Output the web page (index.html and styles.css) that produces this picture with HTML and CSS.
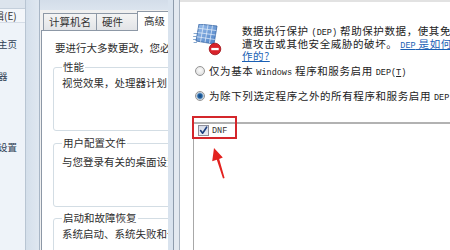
FILE: index.html
```html
<!DOCTYPE html>
<html lang="zh-CN">
<head>
<meta charset="utf-8">
<title>DEP</title>
<link rel="stylesheet" href="styles.css">
</head>
<body>
<div class="screen">
  <aside class="sidebar">
    <div class="menubar"></div>
    <div class="menurow"><span class="menu-text">编辑(E)</span></div>
    <ul class="links">
      <li class="home">控制面板主页</li>
      <li>设备管理器</li>
      <li>远程设置</li>
      <li>系统保护</li>
      <li>高级系统设置</li>
    </ul>
  </aside>
  <div class="frame-left"></div>
  <section class="dlg1">
    <div class="titlebar"></div>
    <div class="client">
      <div class="tabs">
        <span class="tab t-name">计算机名</span>
        <span class="tab t-hw">硬件</span>
        <span class="tab active">高级</span>
      </div>
      <div class="panel">
        <p class="intro">要进行大多数更改，您必须作为管理员登录。</p>
        <fieldset class="grp g1"><legend>性能</legend><p>视觉效果，处理器计划，内存使用，以及虚拟内存</p></fieldset>
        <fieldset class="grp g2"><legend>用户配置文件</legend><p>与您登录有关的桌面设置</p></fieldset>
        <fieldset class="grp g3"><legend>启动和故障恢复</legend><p>系统启动、系统失败和调试信息</p></fieldset>
      </div>
    </div>
  </section>
  <div class="frame-mid"></div>
  <section class="dlg2">
    <div class="head">
      <svg class="dep-icon" width="32" height="32" viewBox="0 0 32 32">
        <defs>
          <linearGradient id="pg" x1="0" y1="0" x2="1" y2="1">
            <stop offset="0" stop-color="#9cc0ec"/>
            <stop offset="1" stop-color="#4a7fc4"/>
          </linearGradient>
        </defs>
        <g stroke="#86a8cf" stroke-width="1" stroke-linecap="round">
          <line x1="1" y1="9.5" x2="5" y2="9.5"/>
          <line x1="0.5" y1="12.5" x2="4.5" y2="12.5"/>
          <line x1="0.5" y1="15.5" x2="4" y2="15.5"/>
          <line x1="1" y1="18.5" x2="3.5" y2="18.5"/>
        </g>
        <polygon points="6,0 24,2 21,20 3,17" fill="url(#pg)" stroke="#3a67a5" stroke-width="0.8"/>
        <g stroke="#e8f1fc" stroke-width="0.7">
          <line x1="10.5" y1="0.5" x2="7.5" y2="17.75"/>
          <line x1="15" y1="1" x2="12" y2="18.5"/>
          <line x1="19.5" y1="1.5" x2="16.5" y2="19.25"/>
          <line x1="5.25" y1="4.25" x2="23.25" y2="6.5"/>
          <line x1="4.5" y1="8.5" x2="22.5" y2="11"/>
          <line x1="3.75" y1="12.75" x2="21.75" y2="15.5"/>
        </g>
        <circle cx="22" cy="25" r="5.8" fill="#d9222a" stroke="#9e1218" stroke-width="0.8"/>
        <rect x="18.3" y="23.9" width="7.4" height="2.3" fill="#ffffff"/>
      </svg>
      <div class="desc">
        数据执行保护 <span class="lat">(DEP)</span> 帮助保护数据，使其免<br>
        遭攻击或其他安全威胁的破坏。 <a class="link"><span class="lat">DEP</span> 是如何工</a><br>
        <a class="link">作的?</a>
      </div>
    </div>
    <div class="radio-row r1">
      <span class="radio"></span>
      <span class="rtext">仅为基本 <span class="lat">Windows</span> 程序和服务启用 <span class="lat">DEP(<u>T</u>)</span></span>
    </div>
    <div class="radio-row r2">
      <span class="radio on"></span>
      <span class="rtext">为除下列选定程序之外的所有程序和服务启用 <span class="lat">DEP(<u>U</u>)</span></span>
    </div>
    <div class="listbox">
      <div class="item">
        <span class="check">
          <svg width="9" height="9" viewBox="0 0 9 9"><path d="M1.6 4.6 L3.6 7.2 L7.6 1.2" fill="none" stroke="#1d3f7e" stroke-width="1.6" stroke-linecap="round" stroke-linejoin="round"/></svg>
        </span>
        <span class="lat name">DNF</span>
      </div>
    </div>
    <div class="mark-box"></div>
    <svg class="mark-arrow" width="26" height="40" viewBox="0 0 26 40">
      <polygon points="9,5 17.8,14.6 14.2,16 19.6,35 18,35.6 11.8,16.8 7.2,18.2" fill="#e3221f"/>
    </svg>
  </section>
</div>
</body>
</html>
```

FILE: styles.css
```css
* { box-sizing: border-box; }
html, body { margin: 0; padding: 0; }
body {
  width: 450px;
  height: 250px;
  overflow: hidden;
  background: #ffffff;
  font-family: "Noto Sans CJK SC", "Noto Sans", sans-serif;
  font-size: 10.5px;
  color: #2e2e2e;
}
.screen {
  display: flex;
  width: 450px;
  height: 250px;
  overflow: hidden;
}

/* sidebar of the control panel */
.sidebar {
  width: 26px;
  flex: none;
  background: #eef3f9;
  border-right: 1px solid #b8c5d3;
  overflow: hidden;
  display: flex;
  flex-direction: column;
  white-space: nowrap;
}
.menubar {
  height: 9px;
  background: #dce4ed;
  border-bottom: 1px solid #c4cfdb;
}
.menurow {
  height: 14px;
  background: #f3f6fa;
  border-bottom: 1px solid #d5dde7;
  line-height: 14px;
  font-size: 10px;
  color: #333;
}
.menu-text { display: block; margin-left: -16px; }
.links {
  list-style: none;
  margin: 15px 0 0 -40px;
  padding: 0;
  font-size: 9.5px;
  color: #2f3f55;
}
.links li { line-height: 12px; margin-bottom: 11.5px; }
.links li.home { margin-bottom: 20px; }

.frame-left {
  width: 14px;
  flex: none;
  background: linear-gradient(to right, #d4dfeb, #dfe7f0);
  border-right: 1px solid #a8b6c6;
}

/* System properties dialog */
.dlg1 {
  width: 128px;
  flex: none;
  display: flex;
  flex-direction: column;
  overflow: hidden;
  white-space: nowrap;
}
.titlebar {
  height: 10px;
  flex: none;
  background: linear-gradient(#d3dde9, #dbe4ee);
}
.client {
  flex: 1;
  background: #f0f0f0;
  padding: 1px 0 0 1px;
  display: flex;
  flex-direction: column;
}
.tabs {
  height: 19px;
  flex: none;
  display: flex;
  align-items: flex-end;
  padding-left: 2px;
  position: relative;
  z-index: 1;
}
.tab {
  height: 17px;
  line-height: 16px;
  padding: 0 5px;
  border: 1px solid #8d98a6;
  border-bottom: none;
  border-right: none;
  background: linear-gradient(#f4f4f4, #e2e4e7);
  color: #333;
}
.tab.t-hw { padding: 0 14px 0 5px; border-right: 1px solid #8d98a6; }
.tab.active {
  height: 20px;
  margin-bottom: -1px;
  margin-left: -1px;
  padding: 1px 6px 0 6px;
  background: #ffffff;
  border-right: none;
}
.panel {
  flex: 1;
  background: #ffffff;
  border: 1px solid #8d98a6;
  border-right: none;
  border-bottom: none;
  padding: 11px 0 0 11px;
  overflow: hidden;
}
.intro {
  margin: 0;
  padding-left: 2px;
  line-height: 12px;
}
.grp {
  width: 200px;
  min-width: 0;
  height: 69px;
  margin: 8px 0 0 0;
  padding: 0 0 0 8px;
  border: 1px solid #d3dde4;
  border-radius: 3px;
}
.grp legend {
  padding: 0 1px;
  line-height: 10px;
}
.grp p { margin: 5px 0 0 0; line-height: 12px; }
.g2 { margin-top: 7px; }
.g2 p { margin-top: 8px; }
.g3 { margin-top: 6px; }

.frame-mid {
  width: 12px;
  flex: none;
  background: linear-gradient(to right,
    #d9e3ee 0, #d9e3ee 5px,
    #8e9cac 5px, #8e9cac 6px,
    #e3e9f0 6px, #e3e9f0 11px,
    #a9b4c1 11px, #a9b4c1 12px);
}

/* DEP tab */
.dlg2 {
  flex: 1;
  position: relative;
  background: #ffffff;
  border-top: 2px solid #e2e2e2;
  padding-left: 13px;
  overflow: hidden;
  white-space: nowrap;
  color: #222;
  letter-spacing: 0.6px;
}
.lat {
  font-family: "Liberation Mono", "DejaVu Sans Mono", monospace;
  font-size: 8.5px;
  letter-spacing: 0;
}
.head {
  display: flex;
  margin-top: 22px;
}
.dep-icon { flex: none; }
.desc {
  margin: 2px 0 0 17px;
  line-height: 10.5px;
}
.link {
  color: #1a5fb4;
  text-decoration: underline;
}
.radio-row {
  display: flex;
  align-items: center;
  gap: 4px;
  height: 12px;
  padding-left: 2px;
}
.r1 { margin-top: 3px; }
.r2 { margin-top: 13px; }
.radio {
  width: 10px;
  height: 10px;
  flex: none;
  border-radius: 50%;
  border: 1px solid #959595;
  background: radial-gradient(circle at 50% 40%, #fbfbfb, #d8d8d8);
}
.radio.on {
  background: radial-gradient(circle, #0f3f73 0, #2566a8 2.2px, #8fb0cf 3px, #e6e6e6 4px);
}
.listbox {
  margin-top: 20px;
  width: 320px;
  height: 140px;
  border-top: 2px solid #b2b2b2;
  border-left: 1px solid #a8a8a8;
  padding: 1px 0 0 4px;
}
.item {
  display: flex;
  align-items: center;
  gap: 3px;
  height: 12px;
}
.check {
  width: 11px;
  height: 11px;
  flex: none;
  display: flex;
  align-items: center;
  justify-content: center;
  border: 1px solid #8f8f9a;
  background: linear-gradient(#d6dbe8, #eceef4);
}
.name { color: #333; font-size: 8.5px; }
.mark-box {
  position: absolute;
  left: 12px;
  top: 114px;
  width: 45px;
  height: 23px;
  border: 2px solid #d4262b;
}
.mark-arrow {
  position: absolute;
  left: 25px;
  top: 141px;
}
```
